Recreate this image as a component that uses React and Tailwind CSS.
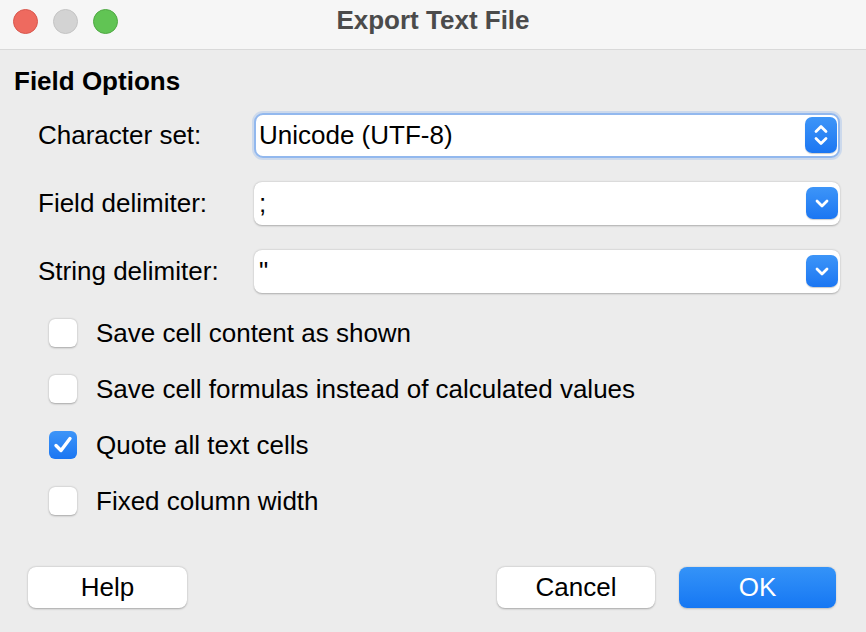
import { useState } from 'react';

function Stepper() {
  return (
    <div className="w-[32px] h-[36px] shrink-0 rounded-[7px] bg-gradient-to-b from-[#3d95f8] to-[#1b76f2] flex items-center justify-center shadow-[0_1px_1px_rgba(0,0,0,0.2)]">
      <svg width="18" height="28" viewBox="0 0 18 28" fill="none" stroke="white" strokeWidth="2.8" strokeLinecap="round" strokeLinejoin="round">
        <path d="M4 10.5 L9 5.5 L14 10.5" />
        <path d="M4 17.5 L9 22.5 L14 17.5" />
      </svg>
    </div>
  );
}

function Dropdown() {
  return (
    <div className="w-[32px] h-[32px] shrink-0 rounded-[7px] bg-gradient-to-b from-[#3d95f8] to-[#1b76f2] flex items-center justify-center shadow-[0_1px_1px_rgba(0,0,0,0.2)]">
      <svg width="18" height="18" viewBox="0 0 18 18" fill="none" stroke="white" strokeWidth="2.8" strokeLinecap="round" strokeLinejoin="round">
        <path d="M4 7 L9 12 L14 7" />
      </svg>
    </div>
  );
}

function SelectRow({ label, value, focused, stepper }) {
  return (
    <div className="flex items-center h-[44px]">
      <span className="w-[254px] shrink-0 pl-[38px] text-[26px] text-black whitespace-nowrap">{label}</span>
      <div
        className={
          focused
            ? 'w-[586px] shrink-0 h-[45px] rounded-[9px] bg-white flex items-center justify-between pl-[3px] pr-[1px] border-[2px] border-[#92b8ee] shadow-[0_0_0_2px_rgba(146,184,238,0.35)]'
            : 'w-[586px] shrink-0 h-[43px] rounded-[8px] bg-white flex items-center justify-between pl-[5px] pr-[2px] shadow-[0_0.5px_2px_rgba(0,0,0,0.28)]'
        }
      >
        <span className="text-[26px] text-black leading-none">{value}</span>
        {stepper ? <Stepper /> : <Dropdown />}
      </div>
    </div>
  );
}

function Check({ label, checked, onToggle }) {
  return (
    <label className="flex items-center h-[28px] cursor-pointer" onClick={onToggle}>
      <span
        className={
          checked
            ? 'ml-[49px] w-[28px] h-[28px] rounded-[6px] bg-gradient-to-b from-[#3d95f8] to-[#1b76f2] flex items-center justify-center'
            : 'ml-[49px] w-[28px] h-[28px] rounded-[6px] bg-white shadow-[0_0.5px_2px_rgba(0,0,0,0.3)]'
        }
      >
        {checked && (
          <svg width="24" height="24" viewBox="0 0 24 24" fill="none" stroke="white" strokeWidth="3.4" strokeLinecap="round" strokeLinejoin="round">
            <path d="M5 12.5 L10 17.5 L19 5.5" />
          </svg>
        )}
      </span>
      <span className="ml-[19px] text-[26px] text-black whitespace-nowrap">{label}</span>
    </label>
  );
}

export default function App() {
  const [opts, setOpts] = useState([false, false, true, false]);
  const labels = [
    'Save cell content as shown',
    'Save cell formulas instead of calculated values',
    'Quote all text cells',
    'Fixed column width',
  ];
  const toggle = (i) => setOpts(opts.map((v, j) => (j === i ? !v : v)));

  return (
    <div className="w-[866px] h-[632px] bg-[#ececec] flex flex-col font-['Liberation_Sans',Arial,sans-serif] overflow-hidden">
      {/* Title bar */}
      <div className="h-[50px] shrink-0 bg-[#f6f6f6] border-b border-[#d9d9d9] grid grid-cols-[1fr_auto_1fr] items-start">
        <div className="flex gap-[15px] pl-[13px] pt-[9px]">
          <span className="w-[25px] h-[25px] rounded-full bg-[#ee6a5f] border border-[#d9574d]" />
          <span className="w-[25px] h-[25px] rounded-full bg-[#d3d3d3] border border-[#c4c4c4]" />
          <span className="w-[25px] h-[25px] rounded-full bg-[#61c454] border border-[#4fa943]" />
        </div>
        <div className="pt-[5px] text-[26px] leading-[30px] font-bold text-[#4b4b4b]">Export Text File</div>
        <div />
      </div>

      <div className="pl-[14px] pt-[16px] text-[26px] leading-[30px] font-bold text-black">Field Options</div>

      <div className="flex flex-col gap-[24px] mt-[17px]">
        <SelectRow label="Character set:" value="Unicode (UTF-8)" focused stepper />
        <SelectRow label="Field delimiter:" value=";" />
        <SelectRow label="String delimiter:" value={'"'} />
      </div>

      <div className="flex flex-col gap-[28px] mt-[26px]">
        {labels.map((l, i) => (
          <Check key={l} label={l} checked={opts[i]} onToggle={() => toggle(i)} />
        ))}
      </div>

      <div className="flex items-center mt-auto mb-[24px] px-[28px]">
        <button className="w-[159px] h-[41px] rounded-[8px] bg-white text-[26px] text-black shadow-[0_0.5px_2px_rgba(0,0,0,0.3)]">Help</button>
        <div className="flex-1" />
        <button className="w-[158px] h-[41px] rounded-[8px] bg-white text-[26px] text-black shadow-[0_0.5px_2px_rgba(0,0,0,0.3)]">Cancel</button>
        <button className="ml-[24px] mr-[2px] w-[157px] h-[41px] rounded-[8px] bg-gradient-to-b from-[#3493f8] to-[#1577f3] text-[26px] text-white shadow-[0_0.5px_2px_rgba(0,0,0,0.2)]">OK</button>
      </div>
    </div>
  );
}
